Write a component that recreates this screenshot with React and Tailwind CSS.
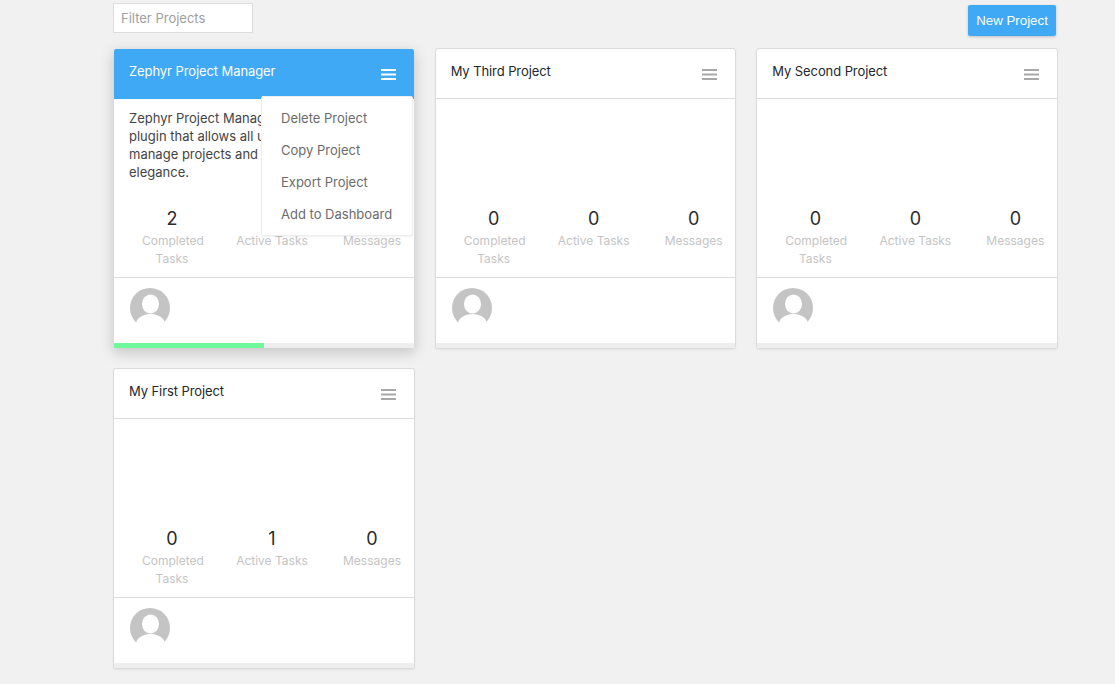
import { useState } from "react";

const projects = [
  {
    name: "Zephyr Project Manager",
    active: true,
    description:
      "Zephyr Project Manager is a plugin that allows all users to manage projects and tasks with elegance.",
    stats: [2, 0, 0],
    progress: 50,
  },
  { name: "My Third Project", stats: [0, 0, 0], progress: 0 },
  { name: "My Second Project", stats: [0, 0, 0], progress: 0 },
  { name: "My First Project", stats: [0, 1, 0], progress: 0 },
];

const menuItems = ["Delete Project", "Copy Project", "Export Project", "Add to Dashboard"];

function Avatar() {
  return (
    <svg width="40" height="40" viewBox="0 0 40 40" className="block">
      <circle cx="20" cy="20" r="20" fill="#c4c4c4" />
      <ellipse cx="20.500" cy="16" rx="8.500" ry="9.500" fill="#ffffff" />
      <ellipse cx="20.500" cy="36" rx="14.500" ry="10" fill="#ffffff" />
    </svg>
  );
}

function Stat({ value, label, wrap }) {
  return (
    <div className="text-center">
      <div className="mb-[2px] text-[18px] leading-[22px] text-[#2b2b2b]">{value}</div>
      <div className={`text-[12px] leading-[18px] text-[#c4c4c4] ${wrap ? "px-[20px]" : "-mx-[10px] whitespace-nowrap"}`}>
        {label}
      </div>
    </div>
  );
}

function ProjectCard({ project }) {
  const { name, active, description, stats, progress } = project;
  return (
    <div
      className={`relative flex h-[301px] flex-col rounded-[3px] border bg-white bg-clip-padding ${
        active
          ? "border-transparent shadow-[0_4px_14px_rgba(0,0,0,0.18)]"
          : "border-[#dcdcdc] shadow-[0_1px_2px_rgba(0,0,0,0.06)]"
      }`}
    >
      <div
        className={`flex h-[50px] shrink-0 items-start justify-between rounded-t-[2px] border-b pl-[15px] pr-[18px] pt-[13px] ${
          active ? "border-[#3fa9f5] bg-[#3fa9f5] text-white" : "border-[#dcdcdc] text-[#23282d]"
        }`}
      >
        <span className="text-[13px] leading-[18px] tracking-[-0.09px]">{name}</span>
        <svg width="15" height="11" viewBox="0 0 15 11" className="mt-[7px]">
          <g fill={active ? "#ffffff" : "#a8a8a8"}>
            <rect y="0" width="15" height="2" />
            <rect y="4.500" width="15" height="2" />
            <rect y="9" width="15" height="2" />
          </g>
        </svg>
      </div>

      <div className="h-[101px] shrink-0 pl-[15px] pt-[10px] text-[13px] leading-[18px] text-[#444444]">
        <p className="w-[205px]">{description}</p>
      </div>

      <div className="grid h-[77px] shrink-0 grid-cols-[repeat(3,100px)] pl-[8px] pt-[8px]">
        <Stat value={stats[0]} label="Completed Tasks" wrap />
        <Stat value={stats[1]} label="Active Tasks" />
        <Stat value={stats[2]} label="Messages" />
      </div>

      <div className="flex-1 border-t border-[#dcdcdc] pl-[16px] pt-[10px]">
        <Avatar />
      </div>

      <div className="h-[5px] shrink-0 bg-[#eeeeee]">
        <div className="h-full bg-[#6ff79c]" style={{ width: `${progress}%` }} />
      </div>

      {active && (
        <div className="absolute left-[147px] top-[47px] w-[152px] rounded-[2px] border border-[#eeeeee] bg-white py-[5px] pl-[19px] shadow-[0_1px_2px_rgba(0,0,0,0.06)]">
          {menuItems.map((item) => (
            <div key={item} className="h-[32px] text-[13px] leading-[32px] whitespace-nowrap text-[#6b6b6b]">
              {item}
            </div>
          ))}
        </div>
      )}
    </div>
  );
}

export default function App() {
  const [filter, setFilter] = useState("");
  const filtered = projects.filter((p) => p.name.toLowerCase().includes(filter.toLowerCase()));

  return (
    <div className="h-[684px] overflow-hidden bg-[#f1f1f1] pl-[113px] pr-[57px] font-['Inter',sans-serif]">
      <div className="flex h-[48px] items-start justify-between">
        <input
          value={filter}
          onChange={(e) => setFilter(e.target.value)}
          placeholder="Filter Projects"
          className="mt-[3px] h-[30px] w-[140px] border border-[#dddddd] bg-white px-[7px] text-[13px] outline-none placeholder:text-[#a0a0a0]"
        />
        <button className="mt-[5px] mr-[2px] h-[31px] w-[88px] rounded-[2px] bg-[#3fa9f5] font-['Liberation_Sans',sans-serif] text-[13.300px] text-white shadow-[0_1px_3px_rgba(0,0,0,0.2)]">
          New Project
        </button>
      </div>
      <div className="grid grid-cols-3 gap-x-[20px] gap-y-[19px]">
        {filtered.map((project) => (
          <ProjectCard key={project.name} project={project} />
        ))}
      </div>
    </div>
  );
}
